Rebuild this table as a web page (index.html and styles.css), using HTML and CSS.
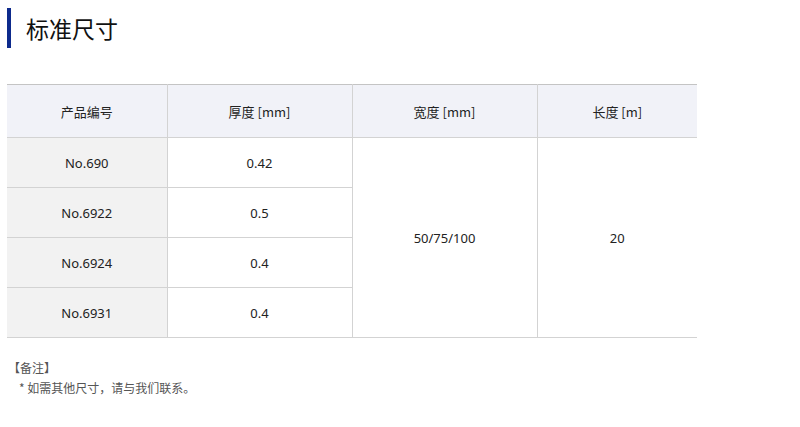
FILE: index.html
```html
<!DOCTYPE html>
<html lang="zh">
<head>
<meta charset="utf-8">
<link rel="stylesheet" href="styles.css">
</head>
<body>
<div class="page">
  <h2 class="title">标准尺寸</h2>
  <table class="spec">
    <colgroup>
      <col class="c1"><col class="c2"><col class="c3"><col class="c4">
    </colgroup>
    <thead>
      <tr><th>产品编号</th><th>厚度 [mm]</th><th>宽度 [mm]</th><th>长度 [m]</th></tr>
    </thead>
    <tbody>
      <tr><td class="code">No.690</td><td>0.42</td><td rowspan="4">50/75/100</td><td rowspan="4">20</td></tr>
      <tr><td class="code">No.6922</td><td>0.5</td></tr>
      <tr><td class="code">No.6924</td><td>0.4</td></tr>
      <tr><td class="code">No.6931</td><td>0.4</td></tr>
    </tbody>
  </table>
  <div class="note">
    <p class="note-title">【备注】</p>
    <p class="note-text">* 如需其他尺寸，请与我们联系。</p>
  </div>
</div>
</body>
</html>
```

FILE: styles.css
```css
html, body {
  margin: 0;
  padding: 0;
  background: #fff;
}
body {
  font-family: "Noto Sans", "Noto Sans CJK SC", sans-serif;
  color: #222;
}
.page {
  padding: 8px 0 0 7px;
}
.title {
  margin: 0;
  height: 40px;
  border-left: 4px solid #0d2a8c;
  padding-left: 15px;
  font-family: "Noto Sans CJK SC", sans-serif;
  font-weight: normal;
  font-size: 23px;
  line-height: 40px;
  color: #111;
}
.spec {
  margin-top: 36px;
  width: 690px;
  border-collapse: collapse;
  table-layout: fixed;
  font-size: 13px;
  border-top: 1px solid #c4c4c4;
}
.c1 { width: 160px; }
.c2 { width: 185px; }
.c3 { width: 185px; }
.c4 { width: 160px; }
.spec th, .spec td {
  text-align: center;
  vertical-align: middle;
  border-bottom: 1px solid #d3d3d3;
  border-right: 1px solid #d3d3d3;
  padding: 0;
}
.spec th:last-child, .spec td[rowspan]:last-child {
  border-right: none;
}
.spec th {
  height: 52px;
  background: #f1f2f8;
  font-weight: normal;
  font-family: "Noto Sans CJK SC", sans-serif;
  color: #222;
}
.spec td {
  height: 49px;
  color: #222;
}
.spec td.code {
  background: #f2f2f2;
}
.note {
  margin-top: 20px;
  font-family: "Noto Sans CJK SC", sans-serif;
  font-size: 12px;
  color: #555;
}
.note p {
  margin: 0;
  line-height: 20px;
}
.note-title {
  padding-left: 1px;
}
.note-text {
  padding-left: 12px;
}
```
